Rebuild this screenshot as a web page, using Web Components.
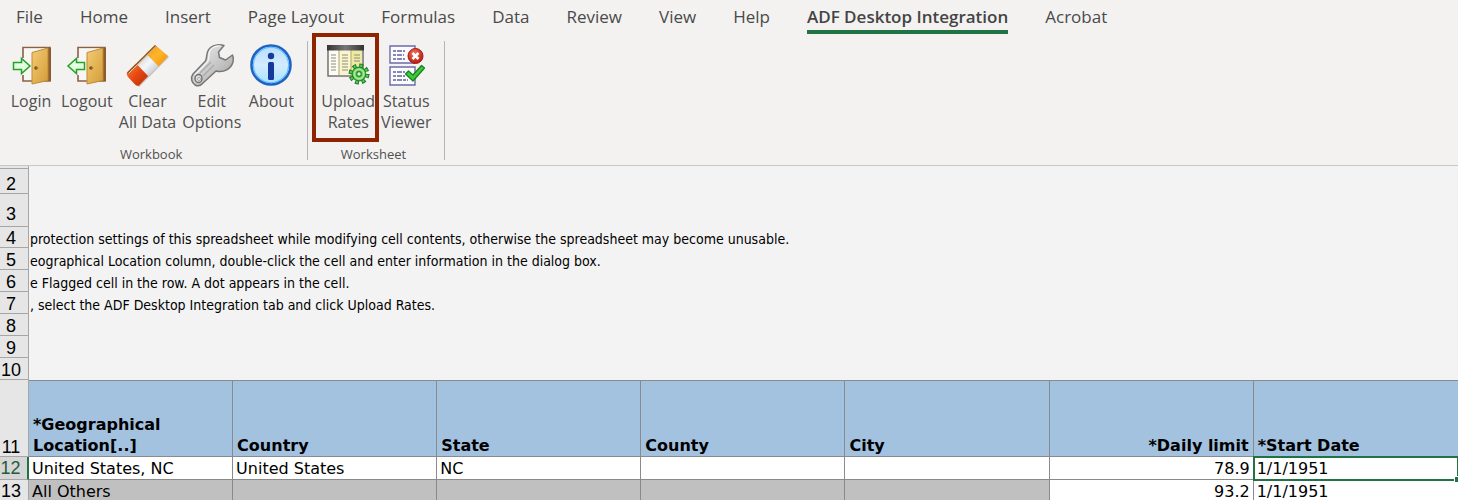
<!DOCTYPE html>
<html lang="en">
<head>
<meta charset="utf-8">
<meta name="viewport" content="width=device-width, initial-scale=1">
<title>Rates workbook</title>
<style>
    body{
        margin: 0;
        height: 100vh;
        overflow: hidden;
        background-color: #f3f3f3;
        font-family: "Open Sans", "Noto Sans", sans-serif;
    }
</style>
</head>
<body>

<ribbon-tabs>
    <ribbon-tab>File</ribbon-tab>
    <ribbon-tab>Home</ribbon-tab>
    <ribbon-tab>Insert</ribbon-tab>
    <ribbon-tab>Page Layout</ribbon-tab>
    <ribbon-tab>Formulas</ribbon-tab>
    <ribbon-tab>Data</ribbon-tab>
    <ribbon-tab>Review</ribbon-tab>
    <ribbon-tab>View</ribbon-tab>
    <ribbon-tab>Help</ribbon-tab>
    <ribbon-tab active>ADF Desktop Integration</ribbon-tab>
    <ribbon-tab>Acrobat</ribbon-tab>
</ribbon-tabs>

<ribbon-bar>
    <ribbon-group name="Workbook">
        <ribbon-button icon="login">Login</ribbon-button>
        <ribbon-button icon="logout">Logout</ribbon-button>
        <ribbon-button icon="eraser">Clear<br>All Data</ribbon-button>
        <ribbon-button icon="wrench">Edit<br>Options</ribbon-button>
        <ribbon-button icon="info">About</ribbon-button>
    </ribbon-group>
    <ribbon-group name="Worksheet">
        <ribbon-button icon="upload" marked>Upload<br>Rates</ribbon-button>
        <ribbon-button icon="status">Status<br>Viewer</ribbon-button>
    </ribbon-group>
</ribbon-bar>

<sheet-grid></sheet-grid>

<script>
const door = `
    <path d="M13 14V3.500H40V37H13V31" fill="none" stroke="#8a6246" stroke-width="1.600"/>
    <path d="M14 4.500H39V36H14Z" fill="#f8f6f3"/>
    <path d="M38 4H41V37H38Z" fill="#8b5c2c"/>
    <path d="M22 8.500L38 4V36.500L22 40Z" fill="url(#wood)" stroke="#c08a34" stroke-width="1"/>
    <circle cx="26" cy="24" r="1.800" fill="#7a4e1c"/>
    <path d="M26 24h2.500" stroke="#b9842f"/>
    <defs>
        <linearGradient id="wood" x1="0" y1="0" x2="1" y2="1">
            <stop offset="0" stop-color="#f3cd73"/>
            <stop offset="1" stop-color="#d49b3a"/>
        </linearGradient>
    </defs>`;

const icons = {
    login: `${door}
        <path d="M3.500 18.500H11.500V14.500L20 22L11.500 29.500V25.500H3.500Z" fill="#e2ffe0" stroke="#27a12b" stroke-width="1.500"/>`,

    logout: `<g transform="translate(-1 0)">${door}</g>
        <path d="M18.500 18.500H10.500V14.500L2 22L10.500 29.500V25.500H18.500Z" fill="#e2ffe0" stroke="#27a12b" stroke-width="1.500"/>`,

    eraser: `
        <defs>
            <linearGradient id="red" x1="0" y1="0" x2="1" y2="1">
                <stop offset="0" stop-color="#f58a55"/>
                <stop offset=".45" stop-color="#ea4a12"/>
                <stop offset="1" stop-color="#b62c04"/>
            </linearGradient>
            <linearGradient id="orange" x1="0" y1="0" x2="1" y2="1">
                <stop offset="0" stop-color="#f39a10"/>
                <stop offset=".5" stop-color="#ffb52a"/>
                <stop offset="1" stop-color="#f08c00"/>
            </linearGradient>
            <linearGradient id="grey" x1="0" y1="0" x2="1" y2="1">
                <stop offset="0" stop-color="#c4c8cd"/>
                <stop offset=".5" stop-color="#f4f6f8"/>
                <stop offset="1" stop-color="#aeb6c2"/>
            </linearGradient>
        </defs>
        <path d="M28 1L41 12L11 42L0 30Z" fill="#7b5a3c" opacity=".35" transform="translate(1 1)"/>
        <path d="M19 9.500L28 1L41 12L31.500 22.500Z" fill="url(#orange)"/>
        <path d="M9 19.500L19 9.500L31.500 22.500L21 32Z" fill="url(#grey)"/>
        <path d="M0 28.500L9 19.500L21 32L12 41.500Q10 42.500 8 40.500L1 33Q-1 30 0 28.500Z" fill="url(#red)"/>
        <path d="M0 28.500L28 1L29.500 2.500L1.500 30Z" fill="#8e5a22"/>
        <path d="M1.500 29.500L29 2.500" stroke="#fff3dc" stroke-width=".800"/>`,

    wrench: `
        <defs>
            <linearGradient id="steel" x1="0" y1="0" x2="1" y2="1">
                <stop offset="0" stop-color="#f1f1f1"/>
                <stop offset=".55" stop-color="#c6c6c6"/>
                <stop offset="1" stop-color="#9b9b9b"/>
            </linearGradient>
        </defs>
        <path d="M33 1.500C25-1 17 3 16 10C15.600 13 15.500 15 14.500 17L2 30C-1 34 1 39 4 41C7 42.500 10 41.500 12 39L25 27C33 29 40 25 42 18C42.700 15 42.500 13 41.500 11L34.500 16L28.500 13.500L27.500 8Z" fill="url(#steel)" stroke="#777" stroke-width="1.500" stroke-linejoin="round"/>
        <path d="M30 2C23 1 18 5 18 11C18 14 17.500 16 16.500 18L4 31" fill="none" stroke="#fff" stroke-width="1.200" opacity=".8"/>
        <path d="M23 21L12 32M20 18L9 29" stroke="#aaa" stroke-width="1.400"/>
        <ellipse cx="7.500" cy="34.500" rx="3.500" ry="4" fill="#ddd" stroke="#6c6c6c" stroke-width="1.300"/>
        <circle cx="8" cy="35" r="1.500" fill="#f7f7f7" stroke="#888" stroke-width=".700"/>`,

    info: `
        <defs>
            <linearGradient id="sky" x1="0" y1="0" x2="0" y2="1">
                <stop offset="0" stop-color="#b5dcff"/>
                <stop offset=".5" stop-color="#d2ecff"/>
                <stop offset="1" stop-color="#a9e2ff"/>
            </linearGradient>
        </defs>
        <circle cx="21" cy="21" r="19.500" fill="url(#sky)" stroke="#1c63c4" stroke-width="2.600"/>
        <circle cx="21" cy="21" r="17.600" fill="none" stroke="#6dbcf8" stroke-width="1.200"/>
        <circle cx="21" cy="12" r="3.200" fill="#143a9c"/>
        <rect x="18" y="18" width="6" height="18" rx="1.500" fill="#143a9c"/>`,

    upload: `
        <defs>
            <linearGradient id="cap" x1="0" y1="0" x2="1" y2="0">
                <stop offset="0" stop-color="#333"/>
                <stop offset=".5" stop-color="#777"/>
                <stop offset="1" stop-color="#333"/>
            </linearGradient>
        </defs>
        <rect x="1" y="2" width="35" height="30" fill="#fcfcf5" stroke="#6a6a6a" stroke-width="1.400"/>
        <path d="M12 6H24V31H12Z" fill="#faf5cd"/>
        <path d="M24 6H35V31H24Z" fill="#eeeaa2"/>
        <path d="M12 6V31M24 6V31" stroke="#a9a56e"/>
        <rect x="0" y="1" width="37" height="5.500" fill="url(#cap)"/>
        <path d="M4 11H9M4 14H9M4 17H9M4 20H9M4 23H9M4 26H9M15 11H21M15 14H21M15 17H21M15 20H21M15 23H21M15 26H21M27 11H33M27 14H33M27 17H33" stroke="#8b8b80" stroke-width="1.200"/>
        <circle cx="32" cy="30" r="8.500" fill="none" stroke="#1c7d24" stroke-width="4" stroke-dasharray="3.800 2.876"/>
        <circle cx="32" cy="30" r="8.300" fill="none" stroke="#65cb5c" stroke-width="2.400" stroke-dasharray="1.800 4.719" stroke-dashoffset="-1"/>
        <circle cx="32" cy="30" r="6.800" fill="#69d05f" stroke="#238a2b" stroke-width="1.200"/>
        <circle cx="32" cy="30" r="4.700" fill="none" stroke="#a9ec99" stroke-width="1.600"/>
        <circle cx="32" cy="30" r="2.300" fill="#e6f5d8" stroke="#238a2b" stroke-width="1.200"/>`,

    status: `
        <defs>
            <radialGradient id="alert" cx=".4" cy=".3" r=".7">
                <stop offset="0" stop-color="#f07058"/>
                <stop offset="1" stop-color="#bd1a10"/>
            </radialGradient>
        </defs>
        <path d="M5 2H30V19H5ZM5 23H30V41H5Z" fill="#fbfbff" stroke="#6c6ca8" stroke-width="1.400"/>
        <path d="M8 7H20M8 11H19M8 15H20M8 28H20M8 32H20M8 36H23" stroke="#62629a" stroke-width="1.400" stroke-dasharray="3 1 5 1"/>
        <circle cx="30.500" cy="12" r="7.500" fill="url(#alert)" stroke="#a11a12"/>
        <path d="M27.500 9L33.500 15M33.500 9L27.500 15" stroke="#fff" stroke-width="2.600"/>
        <path d="M20.500 30L23.500 27L28 31L36.500 21.500L39.500 24L28 37Z" fill="#3cc93c" stroke="#16831b" stroke-width="1.300" stroke-linejoin="round"/>`
};

class RibbonTabs extends HTMLElement{
    constructor(){
        super();
        this.attachShadow({mode: "open"});
    }

    connectedCallback(){
        this.shadowRoot.innerHTML = `
            <nav><slot></slot></nav>
            <style>
                :host{
                    display: block;
                    background-color: #f3f2f1;
                }
                nav{
                    display: flex;
                    gap: 37px;
                    padding: 0 16px;
                }
            </style>
        `;
    }
}

class RibbonTab extends HTMLElement{
    constructor(){
        super();
        this.attachShadow({mode: "open"});
    }

    connectedCallback(){
        this.shadowRoot.innerHTML = `
            <a href="#"><slot></slot></a>
            <style>
                :host{
                    display: block;
                }
                a{
                    display: block;
                    padding: 4px 0 1px;
                    border-bottom: 4px solid transparent;
                    color: #4a4a4a;
                    font-size: 17px;
                    line-height: 25px;
                    white-space: nowrap;
                    text-decoration: none;
                }
                :host([active]) a{
                    border-color: #217346;
                    color: #444;
                    font-weight: 600;
                }
            </style>
        `;
    }
}

class RibbonBar extends HTMLElement{
    constructor(){
        super();
        this.attachShadow({mode: "open"});
    }

    connectedCallback(){
        this.shadowRoot.innerHTML = `
            <slot></slot>
            <style>
                :host{
                    display: flex;
                    height: 131px;
                    background-color: #f3f2f1;
                    border-bottom: 1px solid #c8c8c8;
                }
            </style>
        `;
    }
}

class RibbonGroup extends HTMLElement{
    constructor(){
        super();
        this.attachShadow({mode: "open"});
    }

    connectedCallback(){
        const name = this.getAttribute("name");
        this.shadowRoot.innerHTML = `
            <div class="group" role="group" aria-label="${name}">
                <div class="buttons"><slot></slot></div>
                <div class="name">${name}</div>
            </div>
            <style>
                :host{
                    display: block;
                    padding: 7px 0 5px;
                }
                .group{
                    height: 119px;
                    padding: 0 9px 0 4px;
                    border-right: 1px solid #b5b5b5;
                }
                .buttons{
                    display: flex;
                    height: 103px;
                }
                .name{
                    color: #505050;
                    font-size: 13px;
                    line-height: 20px;
                    text-align: center;
                }
            </style>
        `;
    }
}

class RibbonButton extends HTMLElement{
    constructor(){
        super();
        this.attachShadow({mode: "open"});
    }

    connectedCallback(){
        this.shadowRoot.innerHTML = `
            <button type="button">
                <svg width="42" height="42" viewBox="0 0 42 42" overflow="visible" aria-hidden="true">${icons[this.getAttribute("icon")]}</svg>
                <span><slot></slot></span>
            </button>
            <style>
                :host{
                    display: block;
                    position: relative;
                }
                button{
                    display: flex;
                    flex-direction: column;
                    align-items: center;
                    gap: 5px;
                    min-width: 54px;
                    padding: 3px 3px 0;
                    border: none;
                    background: none;
                    color: #505050;
                    font-family: inherit;
                    font-size: 16px;
                    line-height: 21px;
                    text-align: center;
                    white-space: nowrap;
                }
                :host([marked]){
                    margin-left: 6px;
                }
                /* frame that points out the button to use */
                :host([marked])::after{
                    content: "";
                    position: absolute;
                    inset: -8px -1px 2px -6px;
                    border: 4px solid #8f2400;
                }
            </style>
        `;
    }
}

class SheetGrid extends HTMLElement{
    constructor(){
        super();
        this.attachShadow({mode: "open"});
    }

    connectedCallback(){
        this.shadowRoot.innerHTML = `
            <table>
                <colgroup><col class="numbers"><col><col><col><col><col><col><col class="rest"></colgroup>
                <tbody>
                    ${this.getNotes()}
                    <tr class="head">
                        <th scope="row">11</th>
                        <th scope="col">*Geographical Location[..]</th>
                        <th scope="col">Country</th>
                        <th scope="col">State</th>
                        <th scope="col">County</th>
                        <th scope="col">City</th>
                        <th scope="col" class="number">*Daily limit</th>
                        <th scope="col">*Start Date</th>
                    </tr>
                    <tr class="data current">
                        <th scope="row">12</th>
                        <td>United States, NC</td>
                        <td>United States</td>
                        <td>NC</td>
                        <td></td>
                        <td></td>
                        <td class="number">78.9</td>
                        <td class="selected">1/1/1951</td>
                    </tr>
                    <tr class="data">
                        <th scope="row">13</th>
                        <td class="locked">All Others</td>
                        <td class="locked"></td>
                        <td class="locked"></td>
                        <td class="locked"></td>
                        <td class="locked"></td>
                        <td class="number">93.2</td>
                        <td>1/1/1951</td>
                    </tr>
                </tbody>
            </table>
            <style>
                ${this.getStyle()}
            </style>
        `;
    }

    getNotes(){
        const notes = [
            ["", "", "sliver"],
            [2, "", "tall"],
            [3, "", "taller"],
            [4, "protection settings of this spreadsheet while modifying cell contents, otherwise the spreadsheet may become unusable.", "short"],
            [5, "eographical Location column, double-click the cell and enter information in the dialog box."],
            [6, "e Flagged cell in the row. A dot appears in the cell."],
            [7, ", select the ADF Desktop Integration tab and click Upload Rates."],
            [8, ""],
            [9, ""],
            [10, ""]
        ];
        return notes.map(([row, text, size = ""]) => `
            <tr class="note ${size}">
                <th scope="row">${row}</th>
                <td colspan="7">${text}</td>
            </tr>
        `).join("");
    }

    getStyle(){
        return `
        :host{
            display: block;
        }
        table{
            width: 100%;
            table-layout: fixed;
            border-collapse: separate;
            border-spacing: 0;
            color: #000;
            font-family: "DejaVu Sans", sans-serif;
            font-size: 16px;
            line-height: 20px;
        }
        col{
            width: 14%;
        }
        .numbers{
            width: 29px;
        }
        .rest{
            width: auto;
        }
        td, th{
            box-sizing: border-box;
            padding: 0 3px;
            border-right: 1px solid #8a8a8a;
            border-bottom: 1px solid #8a8a8a;
            text-align: left;
            vertical-align: bottom;
            white-space: nowrap;
        }
        tr > :last-child{
            border-right: none;
        }
        th[scope="row"]{
            padding: 0 6px 0 0;
            border-color: #a6a6a6;
            background-color: #e6e6e6;
            font-family: "Liberation Sans", Arial, sans-serif;
            font-size: 18px;
            font-weight: 400;
            line-height: 18px;
            text-align: center;
        }
        .note{
            height: 22px;
        }
        .note td{
            padding: 0 1px;
            border: none;
            font-family: "DejaVu Sans Condensed", "DejaVu Sans", sans-serif;
            font-size: 14px;
            line-height: 18px;
        }
        .sliver{
            height: 3px;
        }
        .sliver th[scope="row"], .sliver td{
            line-height: 0;
            font-size: 0;
        }
        .tall{
            height: 25px;
        }
        .taller{
            height: 33px;
        }
        .taller th[scope="row"]{
            padding-bottom: 3px;
        }
        .short{
            height: 21px;
        }
        .head{
            height: 77px;
        }
        .head th[scope="col"]{
            padding: 0 4px;
            border-top: 1px solid #8a8a8a;
            background-color: #a3c2df;
            font-weight: 700;
            line-height: 21px;
            white-space: normal;
        }
        .data{
            height: 23px;
        }
        .data td{
            background-color: #fff;
        }
        .data th[scope="row"]{
            vertical-align: middle;
        }
        .current th[scope="row"]{
            border-right: 2px solid #217346;
            background-color: #d6d6d6;
            color: #215c3c;
        }
        .data .locked{
            background-color: #c0c0c0;
        }
        td.number, .head th.number{
            text-align: right;
        }
        .data .selected{
            position: relative;
            outline: 2px solid #217346;
            outline-offset: -1px;
            border-color: transparent;
        }
        .selected::after{
            content: "";
            position: absolute;
            right: 0;
            bottom: -3px;
            width: 3px;
            height: 5px;
            border: solid #fff;
            border-width: 1px 0 0 1px;
            background-color: #217346;
        }
        `;
    }
}

customElements.define("ribbon-tabs", RibbonTabs);
customElements.define("ribbon-tab", RibbonTab);
customElements.define("ribbon-bar", RibbonBar);
customElements.define("ribbon-group", RibbonGroup);
customElements.define("ribbon-button", RibbonButton);
customElements.define("sheet-grid", SheetGrid);
</script>
</body>
</html>
